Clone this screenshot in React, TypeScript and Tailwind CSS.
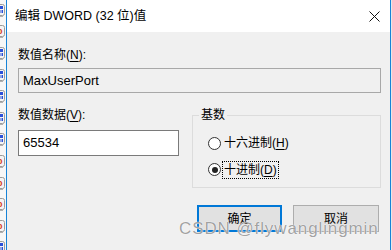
import React from "react";

const rows = ["b", "r", "b", "b", "b", "b", "b", "r", "r", "r", "r", "b"];

function RegIcon({ kind }: { kind: string }) {
  return (
    <svg width="16" height="16" viewBox="0 0 16 16" className="-ml-[10px] shrink-0">
      <rect x="1.5" y="1.5" width="13" height="11" rx="2" fill="#f4f4f4" stroke="#9a9a9a" />
      {kind === "r" ? (
        <text x="2" y="10" fontSize="9" fontWeight="700" fill="#d9472b" fontFamily="Liberation Sans, sans-serif">
          ab
        </text>
      ) : (
        <g fill="#2b50d8">
          <rect x="3" y="3" width="2" height="3" />
          <rect x="7" y="3" width="2" height="3" />
          <rect x="10" y="3" width="3" height="3" />
          <rect x="3" y="7" width="2" height="3" />
          <rect x="6" y="7" width="1.5" height="3" />
          <rect x="9" y="7" width="1.5" height="3" />
          <rect x="11.5" y="7" width="1.5" height="3" />
        </g>
      )}
      <rect x="3" y="13" width="10" height="1" fill="#b0b0b0" />
    </svg>
  );
}

function Radio({ checked, label, accel }: { checked?: boolean; label: string; accel: string }) {
  return (
    <div className="flex items-center h-[26.5px]">
      <span className="w-[13px] h-[13px] rounded-full border border-[#333] bg-white flex items-center justify-center">
        {checked && <span className="w-[6px] h-[6px] rounded-full bg-[#222]" />}
      </span>
      <span
        className={
          "ml-[2px] px-[1px] leading-[16px] " +
          (checked ? "outline outline-1 outline-dotted outline-black" : "outline outline-1 outline-transparent")
        }
      >
        {label}(<span className="underline underline-offset-2">{accel}</span>)
      </span>
    </div>
  );
}

export default function App() {
  return (
    <div className="relative w-[392px] h-[250px] flex overflow-hidden bg-[#f0f0f0] text-black font-['Liberation_Sans','Noto_Sans_CJK_SC',sans-serif] text-[12px]">
      <div className="w-[6px] h-full flex flex-col overflow-hidden bg-[#f7f7f7]">
        {rows.map((k, i) => (
          <div key={i} className="h-[21.6px] flex items-center overflow-hidden shrink-0">
            <RegIcon kind={k} />
          </div>
        ))}
      </div>
      <div className="w-[1px] h-full bg-[#1883d7]" />
      <div className="flex-1 flex flex-col">
        <div className="h-[32px] bg-white flex items-center pl-[8px] pr-[10px]">
          <span className="text-[12.5px] flex-1 leading-none">编辑 DWORD (32 位)值</span>
          <svg width="11" height="11" viewBox="0 0 11 11">
            <path d="M0.5 0.5 L10.5 10.5 M10.5 0.5 L0.5 10.5" stroke="#111" strokeWidth="1" />
          </svg>
        </div>
        <div className="flex-1 flex flex-col pl-[11px] pr-[9px]">
          <div className="mt-[15px] leading-[16px]">
            数值名称(<span className="underline underline-offset-2">N</span>):
          </div>
          <div className="mt-[5px] h-[25px] border border-[#a8a8a8] bg-[#f0f0f0] flex items-center px-[4px] text-[13px]">
            MaxUserPort
          </div>
          <div className="mt-[14px] flex">
            <div className="w-[161px] flex flex-col">
              <div className="leading-[16px]">
                数值数据(<span className="underline underline-offset-2">V</span>):
              </div>
              <div className="mt-[7px] h-[26px] border border-[#7a7a7a] bg-white flex items-center px-[4px] text-[13px]">
                65534
              </div>
            </div>
            <fieldset className="ml-[13px] w-[189px] h-[81px] border border-[#dcdcdc] pl-[15px] pt-[7px]">
              <legend className="-ml-[9px] px-[2px] leading-[16px]">基数</legend>
              <Radio label="十六进制" accel="H" />
              <Radio checked label="十进制" accel="D" />
            </fieldset>
          </div>
          <div className="mt-[17px] flex justify-end gap-[11px] pr-[2px]">
            <button className="w-[85px] h-[27px] border-2 border-[#0078d7] bg-[#e1e1e1] leading-none">确定</button>
            <button className="w-[86px] h-[27px] border border-[#adadad] bg-[#e1e1e1] leading-none">取消</button>
          </div>
        </div>
      </div>
      <div className="w-[1px] h-full bg-[#1883d7]" />
      <div className="w-[1px] h-full bg-[#e8e8e8]" />
      <div className="absolute left-[179px] top-[216px] text-[17px] tracking-[0.9px] text-[rgba(120,120,120,0.7)] [text-shadow:0_0_1px_#fff,0_0_1px_#fff] font-['Liberation_Sans',sans-serif] pointer-events-none">
        CSDN @flywanglingmin
      </div>
    </div>
  );
}
